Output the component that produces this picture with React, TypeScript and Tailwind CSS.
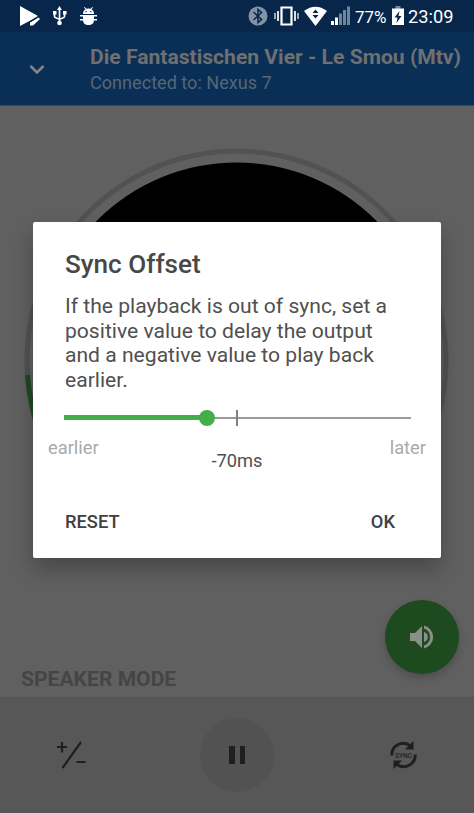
import { useState } from "react";

function StatusBar() {
  return (
    <div className="flex h-8 shrink-0 items-center bg-[#07264a] text-white">
      <svg className="ml-[19px] h-[22px] w-[22px]" viewBox="0 0 22 22" fill="currentColor">
        <path d="M1 1l18 10-8.500 5L1 21z" />
        <path d="M11 17.500l8.500-5 1.500 1.500-7 6.500h-3z" />
        <path d="M10.500 17.200L20 11.500" stroke="#07264a" strokeWidth=".9" />
      </svg>
      <svg className="ml-[11px] h-5 w-[15px]" viewBox="0 0 15 20" fill="none" stroke="currentColor" strokeWidth="1.700">
        <path d="M7.500 3v14M2.500 7v3.500c0 2 5 1.500 5 3.500M12.500 7v3.500c0 2-5 1.500-5 3.500" />
        <path d="M7.500 0l2.500 4h-5zM1 5h3.500v3.500H1zM11 5h3.500v3.500H11z" fill="currentColor" stroke="none" />
        <circle cx="7.500" cy="17" r="2.300" fill="currentColor" stroke="none" />
      </svg>
      <svg className="ml-[13px] h-[19px] w-[17px]" viewBox="0 0 17 19" fill="currentColor">
        <path d="M3 7c0-2.500 1.200-4 2.500-4.700L4 .5 4.700 0l1.600 1.800a7 7 0 014.400 0L12.300 0l.7.5-1.500 1.800C12.800 3 14 4.500 14 7zM0 8h17v1.500H0zM3 9h11v4c0 3-2 5-5.500 5S3 16 3 13zM0 12h17v1.500H0z" />
        <path d="M5.500 4h1.200v1.200H5.500zM10.300 4h1.200v1.200h-1.200z" fill="#07264a" />
      </svg>
      <svg className="ml-[151px] h-5 w-5" viewBox="0 0 20 20" fill="none">
        <circle cx="10" cy="10" r="9.500" fill="#8193a7" />
        <path d="M5.500 6l8 7.500L10 16.500v-13L13.500 6.500l-8 7.500" stroke="#07264a" strokeWidth="1.500" />
      </svg>
      <svg className="ml-[6px] h-5 w-[25px]" viewBox="0 0 25 20" fill="none" stroke="currentColor">
        <path d="M1 7v6M24 7v6" strokeWidth="1.200" />
        <path d="M4 5v10M21 5v10" strokeWidth="1.700" />
        <path d="M7.500 1.500h10v17h-10z" strokeWidth="2.200" />
      </svg>
      <svg className="ml-[5px] h-5 w-[23px]" viewBox="0 0 23 20">
        <path d="M0 5Q11.500-3.500 23 5L11.500 20z" fill="currentColor" />
        <path d="M8.500 7l3-3.500 3 3.500zM8.500 9l3 3.500 3-3.500z" fill="#07264a" />
      </svg>
      <svg className="ml-[4px] h-5 w-[20px]" viewBox="0 0 20 20" fill="currentColor">
        <path d="M0 15h3v4H0zM4 11.500h3V19H4z" />
        <path d="M8 7.500h3V19H8zM12 4h3v15h-3zM16 .5h3V19h-3z" fill="#71859c" />
      </svg>
      <span className="ml-[4px] w-[32px] pt-0.5 text-[17px] leading-none tracking-[-0.1px] whitespace-nowrap">77%</span>
      <svg className="ml-[5px] h-[20px] w-3" viewBox="0 0 12 20">
        <path d="M3.500 0h5v3h-5z" fill="#71859c" />
        <path d="M0 2.500h12V19H0z" fill="currentColor" />
        <path d="M7.500 5L2.500 11.500h3L4.500 17l5-7h-3z" fill="#07264a" />
      </svg>
      <span className="ml-[4px] pt-0.5 text-[18.300px] leading-none whitespace-nowrap">23:09</span>
    </div>
  );
}

function Header() {
  return (
    <header className="flex h-[74px] shrink-0 items-center border-b border-[#3c4650] bg-[#0a2f57] text-[#707070]">
      <svg className="ml-[29px] h-4 w-4" viewBox="0 0 16 16" fill="none" stroke="#858585" strokeWidth="2.500">
        <path d="M1.500 5L8 11.500 14.500 5" />
      </svg>
      <div className="ml-[45px] pt-[2px] whitespace-nowrap">
        <h1 className="text-[21.100px] leading-[27px] font-bold">Die Fantastischen Vier - Le Smou (Mtv)</h1>
        <p className="text-[18.100px] leading-[26px] text-[#566676]">Connected to: Nexus 7</p>
      </div>
    </header>
  );
}

function Player() {
  return (
    <main className="relative h-[591px] shrink-0 bg-[#606060]">
      <svg className="h-[466px] w-full" viewBox="0 0 474 466" fill="none">
        <path d="M71 383A209.500 209.500 0 1 1 402 383" stroke="#525252" strokeWidth="5" />
        <path d="M71 383A209.500 209.500 0 0 1 27.500 269" stroke="#1e4a20" strokeWidth="5" />
        <circle cx="236.500" cy="253.500" r="197" fill="#000" />
      </svg>
      <div className="absolute top-[432px] flex w-full justify-between px-[91px] text-[19px] font-medium text-[#303030]">
        <span className="ml-[5px]">0:48</span>
        <span>4:38</span>
      </div>
      <h2 className="absolute top-[559px] left-[21px] text-[21.100px] leading-7 font-bold text-[#454545]">SPEAKER MODE</h2>
      <button aria-label="Speaker" className="absolute top-[494px] left-[385px] flex h-[74px] w-[74px] items-center justify-center rounded-full bg-[#1e4a20] shadow-[0_4px_8px_rgba(0,0,0,0.2)]">
        <svg className="h-6 w-6" viewBox="0 0 24 24" fill="#8a8f8a">
          <path d="M0 8h5l7-7v22l-7-7H0z" />
          <path d="M14 7a5.200 5.200 0 010 10z" />
          <path d="M14 .5a11.800 11.800 0 010 23v-3a9 9 0 000-17z" />
        </svg>
      </button>
    </main>
  );
}

function Controls() {
  return (
    <footer className="grid h-[116px] shrink-0 grid-cols-[142px_190px_142px] items-center justify-items-center bg-[#575757] text-[#1f1f1f]">
      <button aria-label="Offset">
        <svg className="h-7 w-[29px]" viewBox="0 0 29 28" fill="none" stroke="currentColor" strokeWidth="2.200">
          <path d="M0 6h10M5 1v10.500M24 1L5.500 27M19.500 21h9" />
        </svg>
      </button>
      <button aria-label="Pause" className="flex h-[74px] w-[74px] items-center justify-center gap-[5px] rounded-full bg-[#525252]">
        <span className="h-[18px] w-[5.500px] bg-[#1f1f1f]" />
        <span className="h-[18px] w-[5.500px] bg-[#1f1f1f]" />
      </button>
      <button aria-label="Sync">
        <svg className="h-7 w-[27px]" viewBox="0 0 27 28" fill="none" stroke="currentColor" strokeWidth="2.900">
          <path d="M1.800 14.500A11.500 11.500 0 0 1 20 4.500M25.200 13.500A11.500 11.500 0 0 1 7 23.500" />
          <path d="M23.500 0v8.500H15zM3.500 28v-8.500H12z" fill="currentColor" stroke="none" />
          <text x="13.500" y="16.500" textAnchor="middle" fontSize="6.500" fontWeight="500" fill="currentColor" stroke="none">SYNC</text>
        </svg>
      </button>
    </footer>
  );
}

function SyncDialog() {
  const [offset, setOffset] = useState(-70);
  // the slider covers -400ms to +400ms
  const percent = (offset + 400) / 8;

  return (
    <div role="dialog" className="absolute top-[222px] left-[33px] flex h-[336px] w-[408px] flex-col rounded-[2px] bg-white px-8 text-[#505050] shadow-[0_12px_22px_rgba(0,0,0,0.25)]">
      <h2 className="mt-[26px] text-[26.100px] leading-8 font-medium text-[#484848]">Sync Offset</h2>
      <p className="mt-[14px] text-[21.100px] leading-[24.700px] whitespace-nowrap">
        If the playback is out of sync, set a<br />
        positive value to delay the output<br />
        and a negative value to play back<br />
        earlier.
      </p>
      <div className="relative mt-[17px] -ml-[1.500px] h-4 w-[347px]">
        <div className="absolute top-[7px] h-0.5 w-full bg-[#9a9a9a]" />
        <div className="absolute top-0 left-1/2 h-4 w-0.5 -translate-x-px bg-[#808080]" />
        <div className="absolute top-[5.500px] h-[5px] bg-[#43ae4a]" style={{ width: `${percent}%` }} />
        <div className="absolute top-0 h-4 w-4 -translate-x-1/2 rounded-full bg-[#43ae4a]" style={{ left: `${percent}%` }} />
      </div>
      <div className="-mx-[17px] mt-[10px] flex justify-between text-[18.300px] leading-6 text-[#aaaaaa]">
        <span>earlier</span>
        <span>later</span>
      </div>
      <p className="-mt-[11px] text-center text-[18.300px] leading-6">{offset}ms</p>
      <div className="mt-[37px] flex justify-between pr-[14px] text-[18.300px] leading-6 font-medium text-[#404040]">
        <button onClick={() => setOffset(0)}>RESET</button>
        <button>OK</button>
      </div>
    </div>
  );
}

export default function App() {
  return (
    <div className="relative flex h-[813px] w-[474px] flex-col overflow-hidden bg-[#606060] font-[Roboto,sans-serif]">
      <StatusBar />
      <Header />
      <Player />
      <Controls />
      <SyncDialog />
    </div>
  );
}
